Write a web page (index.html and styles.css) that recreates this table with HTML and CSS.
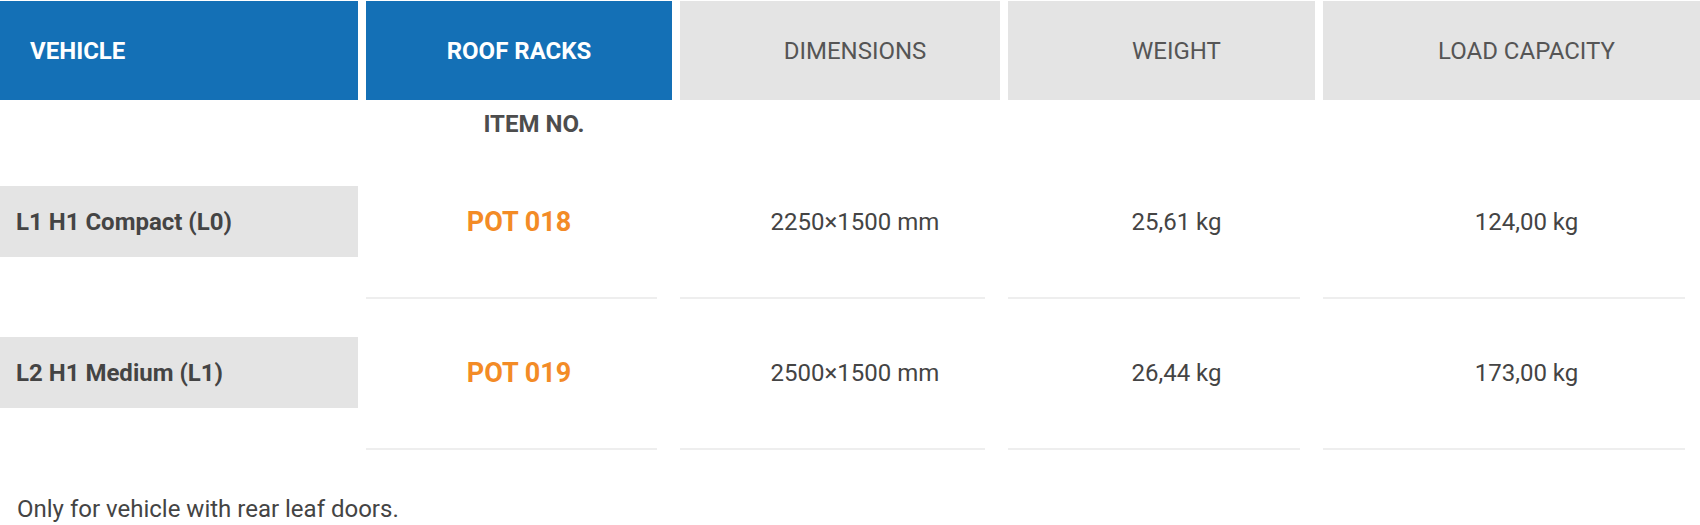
FILE: index.html
```html
<!DOCTYPE html>
<html lang="en">
<head>
<meta charset="utf-8">
<title>Roof racks</title>
<link rel="stylesheet" href="styles.css">
</head>
<body>
<div class="table">
  <div class="head">
    <div class="hcell blue left">VEHICLE</div>
    <div class="hcell blue center">ROOF RACKS</div>
    <div class="hcell gray">DIMENSIONS</div>
    <div class="hcell gray">WEIGHT</div>
    <div class="hcell gray">LOAD CAPACITY</div>
  </div>
  <div class="sub">
    <div></div>
    <div class="subcell">ITEM NO.</div>
  </div>
  <div class="row">
    <div class="veh"><div class="veh-box">L1 H1 Compact (L0)</div></div>
    <div class="dcell item"><span class="pot">POT 018</span></div>
    <div class="dcell">2250×1500 mm</div>
    <div class="dcell">25,61 kg</div>
    <div class="dcell">124,00 kg</div>
  </div>
  <div class="row">
    <div class="veh"><div class="veh-box">L2 H1 Medium (L1)</div></div>
    <div class="dcell item"><span class="pot">POT 019</span></div>
    <div class="dcell">2500×1500 mm</div>
    <div class="dcell">26,44 kg</div>
    <div class="dcell">173,00 kg</div>
  </div>
</div>
<p class="note">Only for vehicle with rear leaf doors.</p>
</body>
</html>
```
FILE: styles.css
```css
html, body {
  margin: 0;
  padding: 0;
  background: #ffffff;
}
body {
  font-family: Roboto, "Liberation Sans", sans-serif;
  font-size: 24px;
  color: #444444;
  width: 1700px;
}
.table {
  padding-top: 1px;
}
.head, .sub, .row {
  display: grid;
  grid-template-columns: 358px 306px 320px 307px 377px;
  column-gap: 8px;
}
.hcell {
  height: 99px;
  display: flex;
  align-items: center;
  line-height: 28px;
}
.hcell.blue {
  background: #1470b6;
  color: #ffffff;
  font-weight: 700;
}
.hcell.left {
  padding-left: 30px;
}
.hcell.center {
  justify-content: center;
}
.hcell.gray {
  background: #e4e4e4;
  color: #555555;
  justify-content: center;
  padding-left: 30px;
}
.sub {
  height: 48px;
  align-items: center;
}
.subcell {
  text-align: center;
  padding-left: 30px;
  font-weight: 700;
  color: #4d4d4d;
  line-height: 28px;
}
.veh {
  padding: 38px 0 42px;
  display: flex;
  align-items: center;
}
.veh-box {
  width: 100%;
  height: 71px;
  background: #e4e4e4;
  display: flex;
  align-items: center;
  padding-left: 16px;
  box-sizing: border-box;
  font-weight: 700;
  color: #444444;
}
.dcell {
  display: flex;
  align-items: center;
  justify-content: center;
  padding-left: 45px;
  margin-right: 15px;
  border-bottom: 2px solid #eeeeee;
  color: #444444;
  padding-bottom: 2px;
}
.dcell.item {
  padding-left: 15px;
}
.pot {
  color: #f38b26;
  font-weight: 700;
  font-size: 27px;
}
.note {
  margin: 45px 0 0 17px;
  line-height: 28px;
  color: #444444;
}
```
